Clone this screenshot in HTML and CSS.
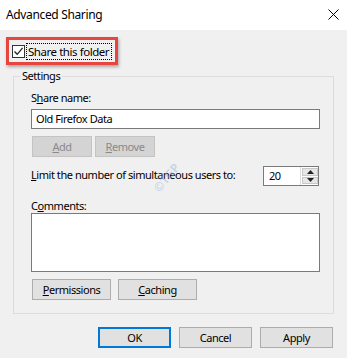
FILE: index.html
```html
<!DOCTYPE html>
<html lang="en">
<head>
  <meta charset="UTF-8">
  <meta name="viewport" content="width=device-width, initial-scale=1.0">
  <title>Advanced Sharing</title>
  <link rel="stylesheet" href="styles.css">
</head>
<body>
  <div class="dialog">
    <header class="titlebar">
      <span class="title">Advanced Sharing</span>
      <svg class="close" width="11" height="11" viewBox="0 0 11 11">
        <path d="M0.5 0.5 L10.5 10.5 M10.5 0.5 L0.5 10.5" stroke="#000" stroke-width="1" fill="none"/>
      </svg>
    </header>

    <main class="content">
      <div class="highlight">
        <label class="check">
          <span class="check-box">
            <svg width="11" height="11" viewBox="0 0 11 11">
              <path d="M1.5 5.5 L4.2 8.3 L9.6 1.8" stroke="#222" stroke-width="1.3" fill="none"/>
            </svg>
          </span>
          <span class="focus">Share this folder</span>
        </label>
      </div>

      <fieldset class="group">
        <legend>Settings</legend>
        <div class="field-label">S<u>h</u>are name:</div>
        <div class="textbox">Old Firefox Data</div>
        <div class="btn-row">
          <button class="btn btn-small" disabled><u>A</u>dd</button>
          <button class="btn btn-small" disabled><u>R</u>emove</button>
        </div>
        <div class="limit-row">
          <span class="limit-label"><u>L</u>imit the number of simultaneous users to:</span>
          <div class="spin">
            <span class="spin-value">20</span>
            <div class="spin-btns">
              <span class="spin-btn"><svg width="7" height="4" viewBox="0 0 7 4"><path d="M3.5 0 L7 4 L0 4 Z" fill="#222"/></svg></span>
              <span class="spin-btn"><svg width="7" height="4" viewBox="0 0 7 4"><path d="M0 0 L7 0 L3.5 4 Z" fill="#222"/></svg></span>
            </div>
          </div>
        </div>
        <div class="field-label comments-label">C<u>o</u>mments:</div>
        <div class="textarea"></div>
        <div class="btn-row wide">
          <button class="btn btn-medium"><u>P</u>ermissions</button>
          <button class="btn btn-medium"><u>C</u>aching</button>
        </div>
      </fieldset>

      <footer class="actions">
        <button class="btn btn-action default">OK</button>
        <button class="btn btn-action">Cancel</button>
        <button class="btn btn-action">Apply</button>
      </footer>
    </main>

    <div class="watermark">&copy;TGP</div>
  </div>
</body>
</html>
```

FILE: styles.css
```css
body {
  margin: 0;
  font-family: "Noto Sans", "Open Sans", sans-serif;
  font-size: 11px;
  line-height: 15px;
  letter-spacing: -0.45px;
  color: #000;
  background: #f0f0f0;
}

.dialog {
  position: relative;
  width: 347px;
  height: 358px;
  overflow: hidden;
  background: #f0f0f0;
}

.titlebar {
  height: 30px;
  background: #fff;
  display: flex;
  align-items: flex-start;
  justify-content: space-between;
}

.title {
  margin: 7px 0 0 6px;
  font-size: 12px;
  letter-spacing: -0.35px;
}

.close {
  margin: 9px 8px 0 0;
}

.content {
  padding-top: 7px;
}

/* red annotation box round the checkbox */
.highlight {
  box-sizing: border-box;
  width: 112px;
  height: 28px;
  margin-left: 6px;
  border: 3px solid #e8453f;
  box-shadow: 1px 2px 3px rgba(0, 0, 0, 0.3);
  display: flex;
  align-items: center;
  padding-left: 3px;
}

.check {
  display: flex;
  align-items: center;
  white-space: nowrap;
}

.check-box {
  box-sizing: border-box;
  width: 13px;
  height: 13px;
  border: 1px solid #333;
  background: #fff;
  display: flex;
  align-items: center;
  justify-content: center;
}

.focus {
  margin-left: 2px;
  padding: 0 2px 0 1px;
  font-size: 11.5px;
  outline: 1px dotted #000;
  outline-offset: 0;
}

.group {
  box-sizing: border-box;
  width: 321px;
  height: 245px;
  margin: 4px 0 0 13px;
  padding: 0 13px 0 17px;
  border: 1px solid #dcdcdc;
  min-width: 0;
}

.group legend {
  padding: 0 2px;
  margin-left: -11px;
  line-height: 14px;
}

.field-label {
  margin-top: 7px;
}

.textbox {
  box-sizing: border-box;
  height: 20px;
  margin-top: 4px;
  padding-left: 4px;
  border: 1px solid #7a7a7a;
  background: #fff;
  line-height: 18px;
}

.btn-row {
  display: flex;
  gap: 3px;
  margin: 7px 0 0 1px;
}

.btn-row.wide {
  gap: 7px;
}

.btn {
  box-sizing: border-box;
  height: 21px;
  padding: 0;
  border: 1px solid #adadad;
  background: #e1e1e1;
  font: inherit;
  letter-spacing: inherit;
  color: #000;
}

.btn:disabled {
  background: #d4d4d4;
  border-color: #c4c4c4;
  color: #8a8a8a;
}

.btn-small {
  width: 60px;
}

.btn-medium {
  width: 79px;
}

.limit-row {
  display: flex;
  justify-content: space-between;
  margin-top: 9px;
  white-space: nowrap;
}

.limit-label {
  padding-top: 1px;
}

.spin {
  box-sizing: border-box;
  width: 56px;
  height: 20px;
  margin-right: 1px;
  border: 1px solid #7a7a7a;
  background: #fff;
  display: flex;
  justify-content: space-between;
}

.spin-value {
  padding-left: 5px;
  line-height: 18px;
}

.spin-btns {
  display: flex;
  flex-direction: column;
  gap: 1px;
  width: 16px;
  padding: 1px 0 1px 1px;
  border-left: 1px solid #dcdcdc;
}

.spin-btn {
  flex: 1;
  background: #e6e6e6;
  border: 1px solid #c8c8c8;
  display: flex;
  align-items: center;
  justify-content: center;
}

.comments-label {
  margin-top: 12px;
}

.textarea {
  box-sizing: border-box;
  height: 59px;
  border: 1px solid #7a7a7a;
  background: #fff;
}

.actions {
  display: flex;
  justify-content: flex-end;
  gap: 8px;
  width: 333px;
  margin-top: 13px;
}

.btn-action {
  width: 73px;
}

.btn.default {
  border: 2px solid #0078d7;
}

.watermark {
  position: absolute;
  left: 150px;
  top: 170px;
  transform: rotate(-50deg);
  font-weight: bold;
  font-size: 12px;
  letter-spacing: 0;
  color: rgba(150, 180, 220, 0.45);
  pointer-events: none;
}
```
